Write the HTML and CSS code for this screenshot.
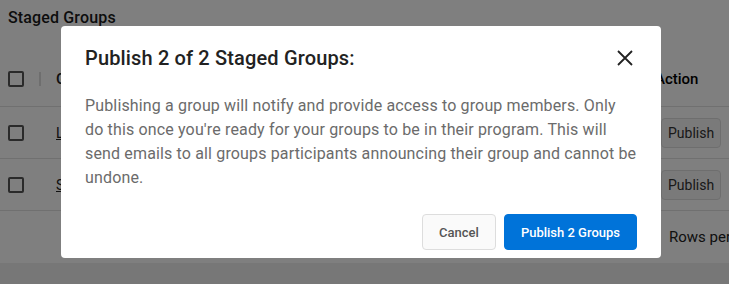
FILE: index.html
```html
<!DOCTYPE html>
<html lang="en">
<head>
    <meta charset="UTF-8">
    <title>Staged Groups</title>
    <link rel="stylesheet" href="styles.css">
</head>
<body>
    <div class="page">
        <h2 class="page-title">Staged Groups</h2>
        <div class="table">
            <div class="row head">
                <span class="check"></span>
                <span class="sep"></span>
                <span class="cell name">Group Name</span>
                <span class="cell action"><span class="head-action">Action</span></span>
            </div>
            <div class="row">
                <span class="check"></span>
                <span class="cell name"><a href="#">Lorem Group</a></span>
                <span class="cell action"><button class="small">Publish</button><button class="small">Edit</button></span>
            </div>
            <div class="row">
                <span class="check"></span>
                <span class="cell name"><a href="#">Second Group</a></span>
                <span class="cell action"><button class="small">Publish</button><button class="small">Edit</button></span>
            </div>
            <div class="row foot">
                <span class="rows">Rows per page</span>
            </div>
        </div>
    </div>

    <div class="overlay"></div>

    <div class="modal">
        <div class="modal-head">
            <h3>Publish 2 of 2 Staged Groups:</h3>
            <button class="close">
                <svg width="24" height="24" viewBox="0 0 24 24"><path d="M5 5 L19 19 M19 5 L5 19" stroke="#222" stroke-width="1.8" fill="none"/></svg>
            </button>
        </div>
        <p class="modal-text">Publishing a group will notify and provide access to group members. Only<br>
            do this once you're ready for your groups to be in their program. This will<br>
            send emails to all groups participants announcing their group and cannot be<br>
            undone.</p>
        <div class="modal-foot">
            <button class="btn">Cancel</button>
            <button class="btn primary">Publish 2 Groups</button>
        </div>
    </div>
</body>
</html>
```

FILE: styles.css
```css
body{
    margin:0;
    font-family:Roboto, "Liberation Sans", sans-serif;
    background-color:#eeeeee;
    overflow:hidden;
}
.page{
    background-color:#ffffff;
    height:263px;
    padding:0 8px;
}
.page-title{
    margin:0;
    padding-top:8px;
    height:44px;
    font-size:16px;
    font-weight:500;
    letter-spacing:0.15px;
    color:#1a1a1a;
}
.row{
    display:flex;
    align-items:center;
    height:52px;
    border-bottom:1px solid #e0e0e0;
    box-sizing:border-box;
    margin-left:-8px;
    padding-left:8px;
    margin-right:-8px;
    overflow:hidden;
}
.row.head{
    height:55px;
}
.check{
    width:16px;
    height:16px;
    border:2px solid #555;
    border-radius:2px;
    box-sizing:border-box;
    flex:none;
}
.sep{
    width:2px;
    height:14px;
    background-color:#ddd;
    margin-left:15px;
    margin-right:-17px;
}
.cell.name{
    margin-left:32px;
    font-size:14px;
    color:#222;
}
.head .cell{
    font-weight:500;
    font-size:15px;
}
.cell a{
    color:#222;
}
.cell.action{
    margin-left:auto;
    width:68px;
    flex:none;
    display:flex;
    gap:8px;
}
.head-action{
    margin-left:-6px;
}
.small{
    font-family:inherit;
    font-size:14px;
    color:#333;
    background-color:#f5f5f5;
    border:1px solid #ddd;
    border-radius:4px;
    height:30px;
    padding:0 6px;
    flex:none;
}
.foot{
    justify-content:flex-end;
    height:53px;
}
.rows{
    font-size:15px;
    color:#222;
    width:60px;
    white-space:nowrap;
}
.overlay{
    position:fixed;
    top:0;
    left:0;
    right:0;
    bottom:0;
    background-color:rgba(0,0,0,0.5);
}
.modal{
    position:absolute;
    top:26px;
    left:61px;
    width:600px;
    height:232px;
    box-sizing:border-box;
    background-color:#ffffff;
    border-radius:4px;
    padding:0 24px;
}
.modal-head{
    display:flex;
    align-items:center;
    justify-content:space-between;
    height:64px;
}
.modal-head h3{
    margin:0;
    font-size:20px;
    font-weight:500;
    letter-spacing:0.15px;
    color:#222;
}
.close{
    background:none;
    border:none;
    padding:0;
    width:24px;
    height:24px;
}
.modal-text{
    margin:0;
    padding-top:4px;
    font-size:16px;
    letter-spacing:0.15px;
    line-height:24px;
    color:#6b6b6b;
    white-space:nowrap;
}
.modal-foot{
    display:flex;
    justify-content:flex-end;
    gap:8px;
    margin-top:24px;
}
.btn{
    font-family:inherit;
    font-size:13px;
    font-weight:500;
    height:36px;
    padding:0 16px;
    border-radius:4px;
    border:1px solid #dddddd;
    background-color:#fafafa;
    color:#555;
}
.btn.primary{
    background-color:#0073d9;
    border-color:#0073d9;
    color:#ffffff;
}
```
